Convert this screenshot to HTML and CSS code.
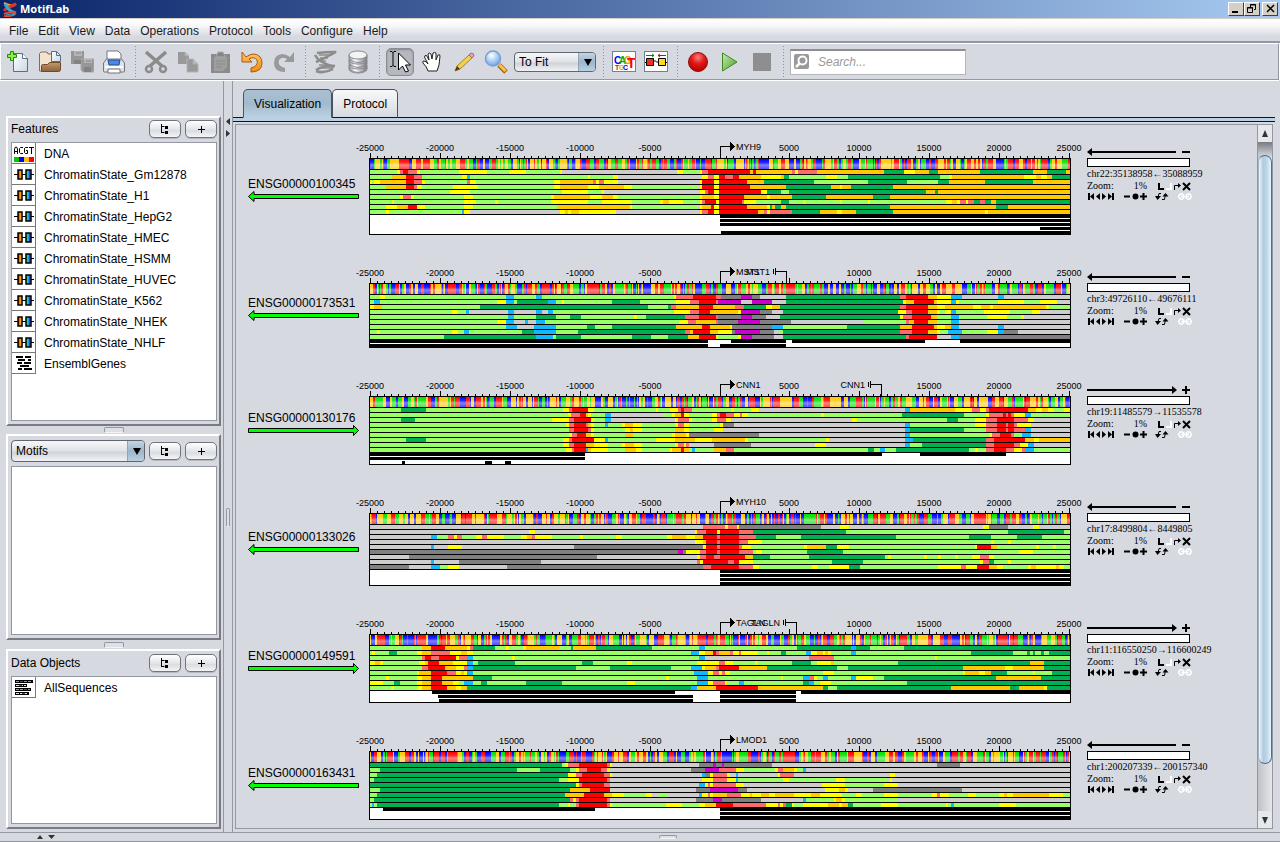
FILE: index.html
```html
<!DOCTYPE html>
<html lang="en">
<head>
<meta charset="utf-8">
<title>MotifLab</title>
<link rel="stylesheet" href="styles.css">
</head>
<body>
<svg class="defs" width="0" height="0" aria-hidden="true">
  <defs>
    <linearGradient id="paper" x1="0" y1="0" x2="1" y2="1"><stop offset="0" stop-color="#fff"/><stop offset="1" stop-color="#c9d8e4"/></linearGradient>
    <linearGradient id="folder" x1="0" y1="0" x2="0" y2="1"><stop offset="0" stop-color="#c09870"/><stop offset="1" stop-color="#8f6238"/></linearGradient>
    <linearGradient id="orange" x1="0" y1="0" x2="0" y2="1"><stop offset="0" stop-color="#ffc766"/><stop offset="1" stop-color="#f08a10"/></linearGradient>
    <linearGradient id="metal" x1="0" y1="0" x2="1" y2="0"><stop offset="0" stop-color="#9a9aa0"/><stop offset=".35" stop-color="#fff"/><stop offset="1" stop-color="#77777f"/></linearGradient>
    <radialGradient id="lens" cx=".4" cy=".3" r=".7"><stop offset="0" stop-color="#fff"/><stop offset="1" stop-color="#6ba6ea"/></radialGradient>
    <radialGradient id="redball" cx=".5" cy=".25" r=".7"><stop offset="0" stop-color="#ff8080"/><stop offset=".5" stop-color="#e01818"/><stop offset="1" stop-color="#c00000"/></radialGradient>
    <linearGradient id="play" x1="0" y1="0" x2="1" y2="1"><stop offset="0" stop-color="#c8e8b0"/><stop offset="1" stop-color="#4aa02c"/></linearGradient>
    <linearGradient id="gloss" x1="0" y1="0" x2="0" y2="1"><stop offset="0" stop-color="#fff" stop-opacity="0"/><stop offset=".35" stop-color="#fff" stop-opacity=".15"/><stop offset=".6" stop-color="#fff" stop-opacity=".5"/><stop offset="1" stop-color="#fff" stop-opacity=".3"/></linearGradient>
    <linearGradient id="warm"><stop offset="0" stop-color="#e01000"/><stop offset=".5" stop-color="#ff9000"/><stop offset="1" stop-color="#ffe060"/></linearGradient>
    <linearGradient id="cool"><stop offset="0" stop-color="#00e000"/><stop offset=".4" stop-color="#20d0e0"/><stop offset=".7" stop-color="#2040ff"/><stop offset="1" stop-color="#a060ff"/></linearGradient>
    <symbol id="i-tree" viewBox="0 0 10 10"><path d="M1.500 0v9M1.500 2.500h3M1.500 8.500h3" stroke="#000" fill="none"/><path d="M5 2h3v3H5zM5 7h3v3H5z"/></symbol>
    <symbol id="i-plus" viewBox="0 0 10 10"><path d="M2 5.500h7M5.500 2v7" stroke="#000"/></symbol>
    <symbol id="i-region" viewBox="0 0 20 13"><path d="M0 6.500h20" stroke="#000"/><rect x="4" y="2" width="4" height="9" fill="url(#warm)" stroke="#000" stroke-width="1.500"/><rect x="12" y="2" width="5" height="9" fill="url(#cool)" stroke="#000" stroke-width="1.500"/></symbol>
  </defs>
</svg>

<header class="titlebar">
  <svg class="logo" width="16" height="16" viewBox="0 0 16 16" fill="none"><path d="M2 2q8 4 12 1M3 4q5 4 11-1" stroke="#f0a030" stroke-width="2"/><path d="M14 3Q4 7 2 10" stroke="#e03028" stroke-width="3"/><path d="M3 3Q7 11 14 12" stroke="#38a8c8" stroke-width="3"/><path d="M2 13q6-3 12-1M2 15q8 1 12-3" stroke="#e04838" stroke-width="2"/><path d="M4 14q5-2 9 0" stroke="#38a8c8"/></svg>
  <h1>MotifLab</h1>
  <div class="window-buttons">
    <button type="button" aria-label="Minimize"><svg width="12" height="10"><path d="M2 7h6v2H2z"/></svg></button>
    <button type="button" aria-label="Restore"><svg width="12" height="10" fill="none" stroke="#000"><path d="M4.500 3V.5h5v5H8M4 1h6M1.500 3.500h5v5h-5zM1 4h6"/></svg></button>
    <button type="button" class="close" aria-label="Close"><svg width="12" height="10" stroke="#000" stroke-width="1.500"><path d="M3 1l7 7M10 1l-7 7"/></svg></button>
  </div>
</header>

<nav class="menubar">
  <a href="#file">File</a><a href="#edit">Edit</a><a href="#view">View</a><a href="#data">Data</a><a href="#operations">Operations</a><a href="#protocol">Protocol</a><a href="#tools">Tools</a><a href="#configure">Configure</a><a href="#help">Help</a>
</nav>

<div class="toolbar" role="toolbar" aria-label="Main">
  <button type="button" aria-label="New"><svg width="24" height="24"><path d="M7.500 3.500h9l5 5v13h-14z" fill="url(#paper)" stroke="#56708c"/><path d="M16.500 3.500v5h5" fill="#fff" stroke="#56708c"/><path d="M4.500 1.500h3v3h3v3h-3v3h-3v-3h-3v-3h3z" fill="#8cf03c" stroke="#1c8a10"/></svg></button>
  <button type="button" aria-label="Open"><svg width="24" height="24"><path d="M1.500 21V3.500L3 2h6l1 2h4v17z" fill="#f2e2d0" stroke="#8c6a50"/><path d="M13.500 1.500h5l4 4v6h-9z" fill="url(#paper)" stroke="#56708c"/><path d="M18.500 1.500v4h4" fill="none" stroke="#56708c"/><path d="M3.500 21.500v-6q0-1 2-1h4l2-2h11v7q0 2-2 2z" fill="url(#folder)" stroke="#74492a"/></svg></button>
  <button type="button" aria-label="Save all" disabled><svg width="24" height="24" fill="#969696"><path d="M1 1h13v13H1z"/><path d="M11 9h13v13H13l-2-2z" stroke="#aaa"/><path d="M4 1h8v5H4zM14 9h8v4h-8z" fill="#b5b5b7"/><path d="M4 10h7v4H4zM14 17h7v5h-7z" fill="#828282"/><path d="M6 3h5M16 11h5" stroke="#858585"/></svg></button>
  <button type="button" aria-label="Print"><svg width="24" height="24"><path d="M5 10V1h11l3 3v6z" fill="#fff" stroke="#70747c"/><path d="M1.500 13l3-4h15l3 4v8q0 1-1 1h-19q-1 0-1-1z" fill="#dfe2e8" stroke="#70747c"/><path d="M6 10h12l-1 5H7z" fill="#4a88e8" stroke="#234a90"/><path d="M3 16h18v2H3z" fill="#fff"/><path d="M6 19h12v4H6z" fill="#fff" stroke="#70747c"/></svg></button>
  <span class="sep"></span>
  <button type="button" aria-label="Cut" disabled><svg width="24" height="24" fill="none" stroke="#8b8b8b"><path d="M2 2l16 14M22 2L6 16" stroke-width="3.500"/><circle cx="5" cy="19" r="3" stroke-width="2.500"/><circle cx="19" cy="19" r="3" stroke-width="2.500"/></svg></button>
  <button type="button" aria-label="Copy" disabled><svg width="24" height="24" fill="#999"><path d="M2 2h7l4 4v8H2z"/><path d="M11 9h6l5 5v8H11z" stroke="#b4b4b6"/><path d="M9 2v4h4M17 9v5h5" fill="#bbb" stroke="#aaa"/></svg></button>
  <button type="button" aria-label="Paste" disabled><svg width="24" height="24"><path d="M3 4h19v19H3z" fill="#8b8b8b"/><path d="M6 7h13v10l-4 4H6z" fill="#9e9e9e"/><path d="M8 7l2-5h5l2 5z" fill="#858585" stroke="#aaa"/><path d="M8 11h9M8 14h9M8 17h6" stroke="#8b8b8b"/></svg></button>
  <button type="button" aria-label="Undo"><svg width="24" height="24"><path d="M2 2v10h10l-3-3q5-3 8 1 2 6-6 8v4q11 0 11-9 0-8-8-9-4 0-8 3z" fill="url(#orange)" stroke="#a85a10"/></svg></button>
  <button type="button" aria-label="Redo" disabled><svg width="24" height="24"><path d="M22 2v10H12l3-3q-5-3-8 1-2 6 6 8v4Q2 22 2 13q0-8 8-9 4 0 8 3z" fill="#999"/></svg></button>
  <span class="sep"></span>
  <button type="button" aria-label="Motif discovery" disabled><svg width="26" height="24" fill="none" stroke="#8c8c8c"><path d="M4 3q8-1 19-1Q12 8 3 12M2 5q3 7 19 12M3 21q8 3 17-2M3 20q8-5 19-4" stroke-width="2.500"/><path d="M6 5h13M7 8h8M5 11h8M6 18h14M6 15h7" stroke-width="1.500"/></svg></button>
  <button type="button" aria-label="Database"><svg width="24" height="24" fill="url(#metal)" stroke="#888890"><ellipse cx="12" cy="19" rx="9" ry="4"/><path d="M3 15v4q9 7 18 0v-4z"/><ellipse cx="12" cy="15" rx="9" ry="4"/><path d="M3 10v4q9 7 18 0v-4z"/><ellipse cx="12" cy="10" rx="9" ry="4"/><path d="M3 5v4q9 7 18 0V5z"/><ellipse cx="12" cy="5" rx="9" ry="4" fill="#f4f4f6"/></svg></button>
  <span class="sep"></span>
  <button type="button" class="pressed" aria-label="Select" aria-pressed="true"><svg width="24" height="24"><path d="M2 1.500h2l1 1 1-1h2M5 2v14M2 16.500h2l1-1 1 1h2" fill="none" stroke="#000"/><path d="M10.500 3v17l4-4 3 6 3-1-3-6h5z" fill="#fff" stroke="#000"/></svg></button>
  <button type="button" aria-label="Pan"><svg width="24" height="24"><path d="M8 21q-1-4-5-8-1-2 1-2 2 0 4 3L4.500 7q0-2 2-1.500L9 10 8 4q1-2 3 0l1 5 1-6q2-1 3 0v7l2-5q2-1 2 1l-1 9q-1 3-2 6z" fill="#fff" stroke="#222"/></svg></button>
  <button type="button" aria-label="Draw"><svg width="24" height="24"><path d="M3 21l2-5L17 5l3 3L8 19z" fill="#f4d050" stroke="#a88420"/><path d="M3 21l2-5 3 3z" fill="#503820"/><path d="M17 5l2-2q3 0 3 3l-2 2z" fill="#f0a0b0" stroke="#a06878"/></svg></button>
  <button type="button" aria-label="Zoom"><svg width="24" height="24"><path d="M15 15l7 7" stroke="#a86808" stroke-width="5"/><path d="M15.500 15l6 6" stroke="#ffc050" stroke-width="3"/><circle cx="9" cy="8.500" r="7.500" fill="url(#lens)" stroke="#7c9cd0" stroke-width="1.500"/></svg></button>
  <span class="combo combo-fit"><select aria-label="Zoom level"><option>To Fit</option></select><svg class="combo-arrow" width="17" height="18" aria-hidden="true"><path d="M5 6h8l-4 7z"/></svg></span>
  <span class="sep"></span>
  <button type="button" aria-label="Show sequence logos"><svg width="24" height="22"><rect x=".5" y=".5" width="23" height="20" fill="#fff" stroke="#6f8292"/><g class="logo-letters"><text x="2" y="13" fill="#00f">C</text><text x="7" y="13" fill="#0a0">A</text><text x="12" y="13" fill="#e8a000">G</text><text x="15" y="17" fill="#f00" class="big">T</text><text x="3" y="19" fill="#f00" class="small">T</text><text x="7" y="19" fill="#e8a000" class="small">G</text><text x="11" y="19" fill="#00f" class="small">C</text></g></svg></button>
  <button type="button" aria-label="Show motif modules"><svg width="24" height="22"><rect x=".5" y=".5" width="23" height="20" fill="#fff" stroke="#6f8292"/><path d="M2 4.500h8M8 3l2 1.500L8 6" stroke="#080" fill="none"/><path d="M22 4.500h-8M16 3l-2 1.500 2 1.500" stroke="#e00" fill="none"/><path d="M1 11.500h3M9 11.500l2-2 2 2 2-2M21 11.500h2" stroke="#000" fill="none"/><path d="M2.500 7.500h7v7h-7z" fill="#f03020" stroke="#000"/><path d="M14.500 7.500h7v7h-7z" fill="#ffd820" stroke="#000"/></svg></button>
  <span class="sep"></span>
  <button type="button" aria-label="Record"><svg width="24" height="24"><circle cx="12" cy="12" r="9.500" fill="url(#redball)" stroke="#8c1010"/></svg></button>
  <button type="button" aria-label="Run"><svg width="24" height="24"><path d="M4.500 3v18L19 12z" fill="url(#play)" stroke="#3a8a20"/></svg></button>
  <button type="button" aria-label="Stop" disabled><svg width="24" height="24"><path d="M3 3h18v18H3z" fill="#8e8e8e"/></svg></button>
  <span class="sep"></span>
  <label class="search">
    <svg width="16" height="16"><rect width="15" height="15" rx="2" fill="#999"/><circle cx="8.500" cy="6.500" r="4" fill="none" stroke="#fff" stroke-width="2"/><path d="M5.500 9.500L2 13" stroke="#fff" stroke-width="2.500"/></svg>
    <input type="text" placeholder="Search..." aria-label="Search">
  </label>
</div>

<main class="workspace">
  <aside class="sidebar">
    <section class="panel features">
      <div class="panel-head"><h2>Features</h2><button type="button" aria-label="Group features"><svg width="10" height="10"><use href="#i-tree"/></svg></button><button type="button" aria-label="Add feature"><svg width="10" height="10"><use href="#i-plus"/></svg></button></div>
      <ul class="list" id="feature-list">
        <li><span class="swatch"><svg width="20" height="17"><g fill="none" stroke="#000"><path d="M.5 9V4l1-2h1l1 2v5M1 6.500h3M9 2.500H6.500l-1 1v4l1 1H9M14 2.500h-2.500l-1 1v4l1 1H13.500v-3H12M15 2.500h5M17.500 2v7"/></g><path d="M0 12h5v5H0z" fill="#0c0"/><path d="M5 12h5v5H5z" fill="#00f"/><path d="M10 12h5v5h-5z" fill="#ffc000"/><path d="M15 12h5v5h-5z" fill="#f00"/></svg></span>DNA</li>
      </ul>
    </section>
    <div class="divider"></div>
    <section class="panel motifs">
      <div class="panel-head"><span class="combo combo-motifs"><select aria-label="Data type"><option>Motifs</option></select><svg class="combo-arrow" width="17" height="20" aria-hidden="true"><path d="M5 7h8l-4 7z"/></svg></span><button type="button" aria-label="Group motifs"><svg width="10" height="10"><use href="#i-tree"/></svg></button><button type="button" aria-label="Add motif"><svg width="10" height="10"><use href="#i-plus"/></svg></button></div>
      <ul class="list"></ul>
    </section>
    <div class="divider"></div>
    <section class="panel objects">
      <div class="panel-head"><h2>Data Objects</h2><button type="button" aria-label="Group data objects"><svg width="10" height="10"><use href="#i-tree"/></svg></button><button type="button" aria-label="Add data object"><svg width="10" height="10"><use href="#i-plus"/></svg></button></div>
      <ul class="list">
        <li><span class="swatch"><svg width="20" height="17" stroke-width="3"><path d="M1 2.500h18M1 6.500h12M1 10.500h16M1 14.500h14" stroke="#000"/><g stroke-width="1" stroke-dasharray="3 1"><path d="M2 2.500h16M2 10.500h14" stroke="#0f0"/><path d="M2 6.500h10M2 14.500h12" stroke="#ff0"/><path d="M6 2.500h3M5 6.500h3M10 10.500h3M8 14.500h3" stroke="#f00"/></g></svg></span>AllSequences</li>
      </ul>
    </section>
  </aside>
  <div class="splitter"><svg width="8" height="20"><path d="M6 0v7L2 3.500zM2 12v7l4-3.500z" fill="#333"/></svg><i></i></div>
  <section class="content">
    <div class="tabs" role="tablist">
      <button type="button" role="tab" class="active" aria-selected="true">Visualization</button><button type="button" role="tab" aria-selected="false">Protocol</button>
    </div>
    <div class="view">
      <div class="canvas" id="canvas"></div>
      <div class="scrollbar">
        <button type="button" aria-label="Scroll up"><svg width="8" height="8"><path d="M1 7h6L4 0z" fill="#333"/></svg></button>
        <div class="track"><div class="thumb"></div></div>
        <button type="button" aria-label="Scroll down"><svg width="8" height="8"><path d="M1 1h6L4 8z" fill="#333"/></svg></button>
      </div>
    </div>
  </section>
</main>
<footer class="bottombar"><svg width="20" height="6"><path d="M1 5h6L4 1zM12 1h7l-3.500 4z" fill="#333"/></svg><i></i></footer>
<script src="app.js"></script>
</body>
</html>
```

FILE: styles.css
```css
* { box-sizing: border-box; }
body {
  margin: 0;
  height: 100vh;
  display: flex;
  flex-direction: column;
  overflow: hidden;
  background: #d6d9df;
  color: #000;
  font: 12px/16px "Liberation Sans", Arial, sans-serif;
}
button, select, input { font: inherit; color: inherit; margin: 0; padding: 0; border: 0; background: none; }
h1, h2, ul { margin: 0; padding: 0; font: inherit; list-style: none; }
svg { display: block; flex: none; }
.defs { position: absolute; }

.titlebar {
  flex: none;
  height: 19px;
  display: flex;
  align-items: center;
  gap: 2px;
  padding: 0 2px;
  background: linear-gradient(90deg, #0a246a, #a6caf0);
  border-bottom: 1px solid #d4d0c8;
}
.titlebar h1 { color: #fff; font: bold 11px/16px "Noto Sans", "DejaVu Sans", sans-serif; }
.window-buttons { margin-left: auto; display: flex; }
.window-buttons button {
  width: 16px;
  height: 14px;
  padding: 1px;
  background: #d4d0c8;
  border: 1px solid #404040;
  border-top-color: #fff;
  border-left-color: #fff;
}
.window-buttons .close { margin-left: 2px; }

.menubar {
  flex: none;
  height: 24px;
  display: flex;
  gap: 10px;
  padding: 4px 9px 0;
  background: linear-gradient(#fff, #f8f8fa 30%, #d6d9df 80%);
  border-bottom: 2px solid #9297a1;
}
.menubar a { color: #1a1a1a; text-decoration: none; }

.toolbar {
  flex: none;
  height: 37px;
  display: flex;
  align-items: center;
  padding: 0 1px;
  border: 1px solid #9297a1;
  border-top-color: #fff;
  border-left-color: #fff;
  margin-right: 1px;
  margin-bottom: 1px;
  box-shadow: 0 1px #fff, 1px 0 #fff;
}
.toolbar button { flex: none; width: 32px; height: 28px; display: grid; place-items: center; }
.toolbar .pressed {
  width: 28px;
  margin: 0 2px;
  border: 1px solid #8a8d94;
  border-radius: 5px;
  background: #b5b8bf;
  box-shadow: inset 0 1px 2px #85888f;
}
.sep {
  flex: none;
  width: 10px;
  height: 32px;
  background: linear-gradient(#8e9199 1px, transparent 1px) 50% 0 / 1px 3px repeat-y;
}
.logo-letters { font: bold 10px "Liberation Sans", sans-serif; }
.logo-letters .big { font-size: 14px; }
.logo-letters .small { font-size: 7px; }

.combo {
  flex: none;
  position: relative;
  display: block;
  border: 1px solid #5f6670;
  border-radius: 4px;
  background: linear-gradient(#f6f7f9, #dfe2e6 50%, #cfd3d9 55%, #f0f2f5);
  overflow: hidden;
}
.combo select { appearance: none; width: 100%; height: 100%; padding: 0 20px 0 4px; outline: 0; display: block; }
.combo-arrow {
  position: absolute;
  top: 0;
  right: 0;
  background: linear-gradient(#c5d5e2, #9db6ca 50%, #b9d0e2);
  border-left: 1px solid #8ea4b6;
  pointer-events: none;
}
.combo-fit { width: 82px; height: 20px; margin: 0 2px; }
.combo-motifs { width: 134px; height: 22px; margin-right: auto; }
.search {
  width: 176px;
  height: 26px;
  margin-left: 2px;
  padding: 0 3px;
  display: flex;
  align-items: center;
  gap: 8px;
  background: #fff;
  border: 1px solid #b4b6bc;
  border-top: 2px solid #8d8e92;
}
.search input { min-width: 0; width: 100%; height: 20px; outline: 0; }
.search input::placeholder { color: #999; font-style: italic; opacity: 1; }

.workspace { flex: 1; min-height: 0; display: flex; }
.sidebar {
  flex: none;
  width: 223px;
  display: grid;
  grid-template-rows: 310fr 8px 206fr 9px 180fr;
  padding: 35px 2px 3px 6px;
}
.panel {
  min-height: 0;
  display: flex;
  flex-direction: column;
  padding: 2px 2px 3px 3px;
  border: 2px solid #787b82;
  border-top-color: #fff;
  border-left-color: #fff;
}
.panel-head { flex: none; display: flex; align-items: center; gap: 4px; }
.features .panel-head { height: 18px; margin-bottom: 4px; }
.motifs .panel-head { height: 25px; margin-bottom: 3px; }
.objects .panel-head { height: 20px; margin-bottom: 3px; }
.panel-head h2 { margin-right: auto; }
.panel-head > button {
  width: 32px;
  height: 18px;
  display: grid;
  place-items: center;
  border: 1px solid #70747b;
  border-radius: 5px;
  background: linear-gradient(#fff, #e4e6ea 50%, #d9dce1 60%, #f4f5f7);
  box-shadow: 0 1px #b5b8be;
}
.list { flex: 1; min-height: 0; background: #fff; border: 1px solid #9297a1; }
.list li { height: 21px; display: flex; align-items: center; gap: 8px; }
.swatch {
  width: 24px;
  height: 21px;
  display: grid;
  place-items: center;
  border-right: 1px solid #787878;
  border-bottom: 1px solid #787878;
}
.divider { display: grid; place-items: center; }
.divider::after, .bottombar i, .splitter i {
  content: "";
  display: block;
  border: 1px solid #9297a1;
  border-radius: 2px;
  background: #dde0e6;
  border-bottom-color: #f2f3f5;
}
.divider::after { width: 18px; height: 4px; }

.splitter {
  flex: none;
  width: 10px;
  display: flex;
  flex-direction: column;
  align-items: center;
  padding-top: 37px;
  border: solid #9297a1;
  border-width: 0 1px;
}
.splitter i { width: 4px; height: 19px; margin-top: 370px; }

.content { flex: 1; min-width: 0; display: flex; flex-direction: column; padding: 8px 5px 0 0; }
.tabs {
  flex: none;
  height: 33px;
  display: flex;
  align-items: flex-start;
  padding-left: 10px;
  background: linear-gradient(#10131c, #10131c) 0 28px / 100% 1px no-repeat, linear-gradient(#b9d1e2, #b9d1e2) 0 29px / 100% 3px no-repeat, linear-gradient(#10131c, #10131c) 0 32px / 100% 1px no-repeat;
}
.tabs button {
  height: 29px;
  padding: 0 10px;
  border: 1px solid #4d535e;
  border-bottom-color: #10131c;
  border-radius: 5px 5px 0 0;
  background: linear-gradient(#f8f9fa, #d6d9df);
}
.tabs .active {
  background: linear-gradient(#a9bfd2, #a3bace 50%, #b9d1e2);
  border-bottom-color: #b9d1e2;
}
.view {
  flex: 1;
  min-height: 0;
  display: flex;
  margin: 2px 2px 3px 2px;
  border: 1px solid #9297a1;
}
.canvas { flex: 1; min-width: 0; overflow: hidden; display: flex; flex-direction: column; gap: 28px; padding: 13px 0 0 12px; }
.scrollbar { flex: none; width: 15px; display: flex; flex-direction: column; border-left: 1px solid #9297a1; background: linear-gradient(90deg, #c0c2c8, #e4e6ea); }
.scrollbar button { height: 17px; display: grid; place-items: center; background: #e6e8ec; }
.track { flex: 1; padding: 13px 0 47px; background: linear-gradient(#777a80, #c4c7cc 12px, transparent 16px); }
.thumb {
  height: 100%;
  border: 1px solid #4f6f88;
  border-left-color: #9eb4c6;
  border-radius: 8px;
  background: linear-gradient(90deg, #eef6fb, #b3cade 35%, #bdd6e8 65%, #e2f6ff);
}

.sequence { flex: none; display: flex; align-items: stretch; }
.seq-name {
  width: 110px;
  margin-right: 11px;
  padding: 20px 0 14px;
  display: flex;
  flex-direction: column;
  justify-content: center;
  font-size: 12px;
  line-height: 14px;
}
.seq-name svg { width: 111px; height: 11px; }
.tracks { overflow: visible; }
.tracks text { font-size: 9px; }
.info { width: 126px; margin-left: 16px; font: 10px/12px "Liberation Serif", "Times New Roman", serif; white-space: nowrap; }
.bar { width: 103px; height: 9px; margin-bottom: 1px; border: 1px solid #000; background: #fff; }
.info-row { height: 12px; display: flex; align-items: center; }
.info-row .percent { width: 35px; text-align: right; margin-right: 10px; }
.info-row .zoom { width: 25px; }
.info-row button { height: 9px; display: block; }
.nav-row { height: 9px; }
.nav { display: flex; margin-right: 8px; }

.bottombar { flex: none; height: 10px; padding-left: 36px; display: flex; align-items: center; border-top: 1px solid #9297a1; border-bottom: 1px solid #9297a1; }
.bottombar i { width: 18px; height: 4px; margin: 0 auto; }
```

FILE: app.js
```js
// State colours of the chromatin tracks, keyed by the letter used in the data below.
const COLORS = {
  l: "#99ff66", g: "#00b050", y: "#ffff00", o: "#ffc800", r: "#ff0000",
  p: "#ff6969", s: "#cdcdcd", d: "#808080", b: "#0fb9ff", m: "#cc00cc"
};

// Each track is a run list: state letter followed by the pixel where the run ends.
const SEQUENCES = [
  {
    name: "ENSG00000100345", strand: "-", region: "chr22:35138958←35088959", gene: "MYH9", seed: 11,
    tracks: [
      "l27 y30 p33 r38 p47 y50 l89 y117 l139 y156 l190 y192 s307 y313 l330 y332 p338 r380 o383 r386 o422 p425 y428 p447 o514 g534 y545 o559 g568 o610 g663 o677 g696 o700",
      "l22 o36 r44 p52 l92 y97 b100 l218 y220 l243 y248 s332 y338 p344 y349 r355 p363 r369 o391 y411 o414 g419 l456 y467 l478 g570 l579 y582 o654 y666 o671 y677 o682 g700",
      "y2 l4 y10 o36 r44 p52 y55 l97 p100 y106 l184 y190 o223 p226 y229 p234 y248 s330 y332 r344 y349 r377 o394 g444 l498 g537 l568 g579 o615 g663 o700",
      "l16 o36 r44 p47 y52 l83 y108 l184 y190 o218 y229 o254 y262 l327 s330 y332 r344 y349 r380 o416 g461 o470 y472 o481 g523 o700",
      "l80 y100 l192 y218 l232 y234 s330 y335 p338 r344 y349 r391 y397 g411 l419 g556 o565 g568 o700",
      "l30 y33 p41 y44 l94 y103 l181 y184 o220 y232 o243 y248 l330 y332 o344 y349 r374 o397 y400 o422 g456 o503 g520 o700",
      "l22 y24 l94 y106 l125 y128 l181 y218 l232 y262 l290 y293 o299 y313 l330 y332 p335 r346 y349 r372 p374 y386 l411 g419 l433 y436 l470 y472 l498 y500 l576 y582 o587 y590 p596 y598 p604 g610 p615 g621 o626 g700",
      "l16 y27 o38 r47 y55 l94 y103 l187 o260 y262 l327 s330 y332 o341 r344 y349 r377 o397 y400 g402 o405 g411 o416 g520 o626 g638 o700",
      "l16 y19 l92 b94 y100 s190 y195 o198 y201 o209 y246 s330 y332 p338 r344 y349 r388 o394 p397 y400 p422 g450 o467 y472 o486 g523 o615 y618 o700"
    ],
    genes: [[[350, 700]], [[350, 700]], [[350, 700]], [[670, 700]], [[351, 700]]]
  },
  {
    name: "ENSG00000173531", strand: "-", region: "chr3:49726110←49676111", gene: "MST1", end: 416, seed: 23,
    tracks: [
      "l10 y15 l136 b144 l166 b172 l304 y306 p323 r346 p351 d371 m382 d390 s416 g530 p536 r558 o567 y581 b592 s628 b634 s700",
      "l4 b10 l127 y136 b144 l147 g178 b186 l192 y194 l242 g270 l306 y320 p329 r346 p348 m371 s382 m402 s416 g533 y536 o544 r564 o567 y581 b586 y589 l628 y654 l670 y687 s700",
      "y4 o12 l110 g278 l298 g301 p306 o329 r343 o365 p374 g396 y402 o410 g530 p536 r558 o567 y575 o603 y611 o620 y623 o676 y679 l700",
      "l82 y88 l96 b99 s138 b144 s166 b172 s178 b183 l304 y320 p329 r340 o368 y371 m390 d402 s413 g528 y536 p542 r558 o567 y570 l575 y581 b586 l614 y640 l662 y670 s700",
      "l138 b144 l166 g186 l200 g211 l264 y267 l276 g315 p329 r346 p348 d371 m382 d396 s410 g530 y533 p542 r561 o567 l581 b589 l617 y637 l651 y654 s700",
      "l127 y136 b144 s155 b158 s166 b175 l309 y318 p326 o346 p348 d368 m390 d421 s494 l536 p539 o544 r558 o567 l581 b589 s700",
      "l136 b147 s164 b186 l217 g225 l242 g306 o332 r340 o360 y362 d402 b413 l477 g530 o542 r564 o567 y575 o581 b589 s628 b634 s700",
      "l7 y10 l82 y88 l94 b99 l152 g164 b186 l208 g315 p320 o323 r340 o348 y362 d365 m390 d404 s410 l413 g530 p542 r558 o567 y570 l578 b592 l617 y628 b634 d648 s700",
      "l74 g166 b183 l186 g211 l262 g281 l298 g318 o329 r346 y348 l368 y371 m382 d404 s413 g536 p539 r567 s581 b589 d700"
    ],
    genes: [[[0, 338], [361, 416], [422, 555], [590, 700]], [[0, 338], [350, 416]]]
  },
  {
    name: "ENSG00000130176", strand: "+", region: "chr19:11485579→11535578", gene: "CNN1", end: 511, seed: 37,
    tracks: [
      "l31 g56 l193 y199 p202 r218 y224 l286 y288 l300 y308 p311 r314 p322 l361 y364 l381 y389 s535 b540 o585 y602 p610 y616 p619 r658 o666 y672 o678 y684 l694 y700",
      "l198 y201 p210 r216 o218 y221 l235 b241 s294 l302 y305 o311 r314 y319 l342 y347 p350 r356 p364 y370 p372 y378 l451 y454 l532 g594 l616 y619 p633 r636 p638 r641 p644 y655 b661 l700",
      "l31 g45 l182 y199 p204 r221 y224 l235 b241 s305 y308 p319 y322 l342 y347 p356 y361 s482 y487 l577 g588 l605 y616 p627 r644 p658 y664 s700",
      "l196 y199 p204 r216 p218 o221 y224 l235 b238 l252 y255 o263 y272 l305 y308 p314 y319 l350 y353 d364 s535 b540 l605 y616 p627 r636 p638 r644 p647 y661 s700",
      "l199 p204 r218 p221 y224 l255 y260 o263 y272 l305 o314 y319 l344 y353 s535 b540 g594 l616 p627 r636 p638 r644 p655 b661 s700",
      "l199 y202 p207 r216 o221 y224 l255 o263 l302 y305 o316 y319 d389 s535 b540 l619 y622 p630 r641 p644 l652 b661 s700",
      "l36 g56 l193 y199 p202 r224 y235 b238 l286 y305 o325 y342 o375 y378 l456 y459 s535 b543 g616 p624 r655 o664 y669 o700",
      "l193 y199 p204 r216 o224 y238 l252 y255 o264 y272 l305 y308 p314 y316 p319 s344 d381 s445 y456 s535 b540 l552 g616 p624 r644 p650 y658 b664 s700",
      "l196 y202 p204 r216 b218 o221 y238 l255 o266 y272 l300 y302 o311 r314 o319 l322 b325 l344 o356 p364 l498 g504 l510 b515 l526 g599 l605 y608 l616 p624 r636 p644 y652 p655 b664 l700"
    ],
    genes: [[[0, 215], [350, 512], [550, 636]], [[0, 215]], [[32, 35], [115, 122], [135, 141]]]
  },
  {
    name: "ENSG00000133026", strand: "-", region: "chr17:8499804←8449805", gene: "MYH10", seed: 41,
    tracks: [
      "s333 p355 y358 p367 y369 d451 s470 y479 s613 y619 d638 s663 y669 s700",
      "s159 y165 s325 y327 p336 r347 y350 r369 p383 g476 l638 g694 l700",
      "s61 b67 l78 p84 y87 p92 l106 y112 p117 y134 l151 y157 o162 p165 y182 l210 y213 l246 y252 l297 y302 o316 y325 o333 r347 p350 r369 p386 g406 l431 g526 l599 g621 l647 g672 l700",
      "s325 y333 o336 r347 p350 r369 p378 y392 l621 y624 l638 y641 l700",
      "s61 b64 s78 y92 s204 d333 y336 r347 p350 r369 p372 y381 l434 y437 o456 g467 y479 l605 y607 r621 o627 l666 y669 l683 y686 l700",
      "d308 m313 d316 y330 p336 r347 p350 r369 p383 l386 y392 l437 g473 l649 y663 l700",
      "s39 d227 s327 y330 p336 r344 p350 r375 o383 g400 l439 g515 l518 y521 l554 y557 l568 y571 l585 y588 l602 y610 p619 y624 l700",
      "s61 b64 s89 d171 s327 p330 y333 r358 p364 r369 y383 l462 g493 l610 y613 p619 g624 l638 y641 l700",
      "d39 s61 b70 l78 y89 s137 d333 p341 r369 p383 y389 l442 y448 l459 y479 g490 l568 y591 p596 y607 r619 o627 y633 l658 y661 o666 y686 o689 y694 l700"
    ],
    genes: [[[350, 700]], [[350, 700]], [[350, 700]], [[350, 700]]]
  },
  {
    name: "ENSG00000149591", strand: "+", region: "chr11:116550250→116600249", gene: "TAGLN", end: 426, seed: 59,
    tracks: [
      "l52 o61 r75 o97 y100 p103 g125 l136 y139 l153 y156 o189 l201 g203 o226 g282 l329 b335 l427 g481 b486 g500 l534 g700",
      "l2 y5 l19 g27 l47 y52 o61 p80 y91 o97 y103 l321 b329 y335 o343 r346 p349 o360 p363 y369 p371 y388 l397 y399 l411 g416 l436 b441 y447 o453 y455 o458 y461 l481 b486 l601 g643 l657 g660 l663 g665 l671 g674 l679 g700",
      "l52 p55 r61 p69 r86 y89 p97 b103 l142 y145 l329 b335 s439 p464 l565 y567 l700",
      "y5 o10 y13 l49 y55 o58 r69 o83 y97 b103 l108 g145 l212 g223 l257 y262 l327 y349 p355 y363 l385 y388 l422 g441 l447 y461 o464 l528 g660 o674 g700",
      "l52 p58 r75 o86 y94 p97 b103 g206 l240 g301 l321 b332 y335 o346 p349 r369 o397 g467 l478 g593 o635 y643 o674 g700",
      "l47 y49 o61 r77 p86 y91 o94 y97 b103 l324 b338 y343 p349 y352 p355 y360 l453 y464 l593 y595 o609 y615 o621 g637 l663 y665 l682 g700",
      "l16 y19 l47 y52 o61 r72 o103 g122 l296 y299 l327 b338 l411 y413 l433 b439 p444 y447 l453 b458 l481 b486 y503 l514 g626 o671 g700",
      "y13 l24 g30 l47 y52 o61 r72 o83 y89 l94 b103 l111 g117 l156 g192 l257 y265 l327 b338 y343 p355 y357 l369 b374 l433 g439 b444 l450 y461 l537 g700",
      "l21 y24 l47 y52 o61 r77 o86 y91 o97 g321 b327 o346 r388 o453 g458 l467 g581 o640 g649 o674 y677 g700"
    ],
    genes: [[[62, 305], [350, 426], [431, 700]], [[68, 323], [350, 426]], [[69, 323], [350, 426]]]
  },
  {
    name: "ENSG00000163431", strand: "-", region: "chr1:200207339←200157340", gene: "LMOD1", seed: 73,
    tracks: [
      "g192 l195 y198 p209 r237 p240 y242 s329 d343 m346 d352 m354 d402 s567 d590 s700",
      "l10 g147 l170 g200 l206 y209 p217 r231 p237 y240 s321 d335 m349 p366 y374 l405 y408 p413 o424 y427 l433 b436 s700",
      "l7 g198 y206 p212 r234 p240 y242 s332 b335 d340 y343 p357 y360 s366 b368 s408 y410 p424 s520 y525 s700",
      "l4 g189 l198 y209 r237 p240 s332 y343 p357 y366 b368 l413 y419 l466 y475 l517 s520 y522 s700",
      "g206 y209 p212 r234 p240 s329 b335 y338 p340 y343 p366 y374 s452 y475 l514 y528 s700",
      "l10 g200 o220 r240 s326 d340 m368 d377 s455 y469 o475 y478 s503 d592 s700",
      "l7 g195 o214 r234 o242 y254 l276 y282 s287 l298 s329 b332 y338 p340 y343 o357 p371 y380 o382 y391 o399 y405 o424 y441 o450 y472 l486 y492 l514 y528 l562 y567 p570 y579 l598 y606 l629 y634 o637 y643 o679 y693 l700",
      "l4 g200 p203 y206 p209 r237 p240 s326 d343 m352 d391 s433 b436 l464 y466 o472 y475 l528 s700",
      "l2 b4 l7 g189 l198 y200 l206 p209 r237 p240 y242 l296 y312 l329 y335 o346 r363 p396 y408 p410 y413 p416 g422 y424 l433 y458 o469 y472 o478 g483 l511 y528 l576 y578 l581 b584 l629 y646 l700"
    ],
    genes: [[[13, 225], [350, 700]], [[350, 700]], [[350, 700]]]
  }
];

const rect = (x, y, w, h, fill) => `<rect x="${x}" y="${y}" width="${w}" height="${h}" fill="${fill}"/>`;

// Base composition strip: narrow columns from a small seeded generator.
function dnaStrip(seed) {
  const bases = ["#00e000", "#0000ff", "#ff0000", "#ffc800"];
  const widths = [1, 1, 1, 2, 2, 2, 3, 4];
  let state = seed * 7919, x = 0, out = "";
  const next = n => {
    state = (state * 1664525 + 1013904223) % 4294967296;
    return Math.floor(state / 4294967296 * n);
  };
  while (x < 700) {
    const w = Math.min(700 - x, widths[next(8)]);
    out += rect(x + 1, 21, w, 10, bases[next(4)]);
    x += w;
  }
  return out + rect(1, 21, 700, 10, "url(#gloss)");
}

function ruler(seq) {
  let out = "";
  for (let i = 0; i <= 100; i++) {
    const x = 1 + i * 7 - (i > 50 ? 1 : 0);
    const major = i % 10 === 0;
    out += rect(x, major ? 15 : 18, 1, major ? 5 : 2, "#000");
    const value = (i - 50) * 500;
    const hidden = value === 0 || (seq.end && Math.abs(x - seq.end) < 30);
    if (major && !hidden) out += `<text x="${x}" y="13" text-anchor="middle">${value}</text>`;
  }
  return out;
}

function geneMarks(seq) {
  let out = `<path d="M351.500 20V8.500H362" fill="none" stroke="#000"/><path d="M361 4v9l5-4.500z"/><text x="367" y="12">${seq.gene}</text>`;
  if (seq.end) {
    const e = seq.end;
    out += `<path d="M${e + 1}.5 20V8.500H${e - 10}M${e - 10}.5 5v7M${e - 12}.5 6v5" fill="none" stroke="#000"/><text x="${e - 15}" y="12" text-anchor="end">${seq.gene}</text>`;
  }
  return out;
}

function drawTracks(seq) {
  const box = 57 + seq.genes.length * 4;
  let out = ruler(seq) + geneMarks(seq) + rect(0, 20, 702, box, "#000") + dnaStrip(seq.seed);
  seq.tracks.forEach((runs, row) => {
    let start = 0;
    for (const run of runs.split(" ")) {
      const end = Number(run.slice(1));
      out += rect(start + 1, 32 + row * 5, end - start, 4, COLORS[run[0]]);
      start = end;
    }
  });
  out += rect(1, 77, 700, seq.genes.length * 4 - 1, "#fff");
  seq.genes.forEach((spans, row) => {
    for (const [a, b] of spans) out += rect(a + 1, 77 + row * 4, b - a, 3, "#000");
  });
  return `<svg class="tracks" width="702" height="${20 + box}" shape-rendering="crispEdges">${out}</svg>`;
}

const button = (label, w, body) =>
  `<button type="button" aria-label="${label}"><svg width="${w}" height="9" fill="none" stroke="#000">${body}</svg></button>`;

function infoPanel(seq) {
  const forward = seq.strand === "+";
  const arrow = forward
    ? '<path d="M0 13h86v2H0z"/><path d="M85 10v8l5-4z"/><path d="M95 13h8v2h-8zM98 10h2v8h-2z"/>'
    : '<path d="M4 13h85v2H4z"/><path d="M5 10v8l-5-4z"/><path d="M95 13h8v2h-8z"/>';
  return `<div class="info"><svg width="104" height="20">${arrow}</svg><div class="bar"></div>
    <div class="info-row">${seq.region}</div>
    <div class="info-row"><span class="zoom">Zoom:</span><span class="percent">1%</span>
      ${button("Left end", 8, '<path d="M2 1v6h5" stroke-width="2"/>')}
      ${button("Right end", 8, '<path d="M6 1v6H1" stroke="#fff" stroke-width="2"/>')}
      ${button("Flip", 9, '<path d="M1.500 8V3.500H7"/><path d="M5 1v5l3-2.500z" fill="#000" stroke="none"/>')}
      ${button("Hide", 9, '<path d="M1 1l7 7M8 1L1 8" stroke-width="2"/>')}</div>
    <div class="info-row nav-row"><span class="nav">
      ${button("To start", 8, '<path d="M2 1v7" stroke-width="2"/><path d="M7 1v7L3 4.500z" fill="#000" stroke="none"/>')}
      ${button("Back", 6, '<path d="M5 1v7L1 4.500z" fill="#000" stroke="none"/>')}
      ${button("Forward", 6, '<path d="M1 1v7l4-3.500z" fill="#000" stroke="none"/>')}
      ${button("To end", 8, '<path d="M1 1v7l4-3.500z" fill="#000" stroke="none"/><path d="M6 1v7" stroke-width="2"/>')}</span>
      <span class="nav">${button("Zoom out", 8, '<path d="M1 4.500h6" stroke-width="2"/>')}
      ${button("Reset zoom", 8, '<circle cx="4.500" cy="4.500" r="3" fill="#000" stroke="none"/>')}
      ${button("Zoom in", 8, '<path d="M1 4.500h7M4.500 1v7" stroke-width="2"/>')}</span>
      <span class="nav">${button("Reverse", 14, '<path d="M6 1.500H4L2.500 7M7 7.500h2.500L10.500 2"/><path d="M0 4h6L2.500 8zM7.500 4.500h6L10.500 1z" fill="#000" stroke="none"/>')}</span>
      ${button("Link", 17, '<path d="M6 2H3L1.500 4.500 3 7h3M10 2h3l1.500 2.500L13 7h-3M4 4.500h8M6.500 2v5M9.500 2v5" stroke="#fff" stroke-width="1.500"/>')}</div></div>`;
}

function nameArrow(forward) {
  const d = forward ? "M.5 3.500h105v-3l5 5-5 5v-3H.5z" : "M110.500 3.500H6v-3l-5.500 5 5.500 5v-3h104.500z";
  return `<svg viewBox="0 0 111 11"><path d="${d}" fill="#0f0" stroke="#000"/></svg>`;
}

document.getElementById("canvas").innerHTML = SEQUENCES.map(seq =>
  `<article class="sequence"><div class="seq-name">${seq.name}${nameArrow(seq.strand === "+")}</div>${drawTracks(seq)}${infoPanel(seq)}</article>`
).join("");

const cells = ["Gm12878", "H1", "HepG2", "HMEC", "HSMM", "HUVEC", "K562", "NHEK", "NHLF"];
document.getElementById("feature-list").insertAdjacentHTML("beforeend",
  cells.map(c => `<li><span class="swatch"><svg width="20" height="13"><use href="#i-region"/></svg></span>ChromatinState_${c}</li>`).join("") +
  '<li><span class="swatch"><svg width="20" height="17" stroke="#000" stroke-width="2"><path d="M2 2h7M11 2h6M4 5h7M14 5h3M3 8h5M10 8h7M6 11h9M4 14h4M10 14h8"/></svg></span>EnsemblGenes</li>');
```
